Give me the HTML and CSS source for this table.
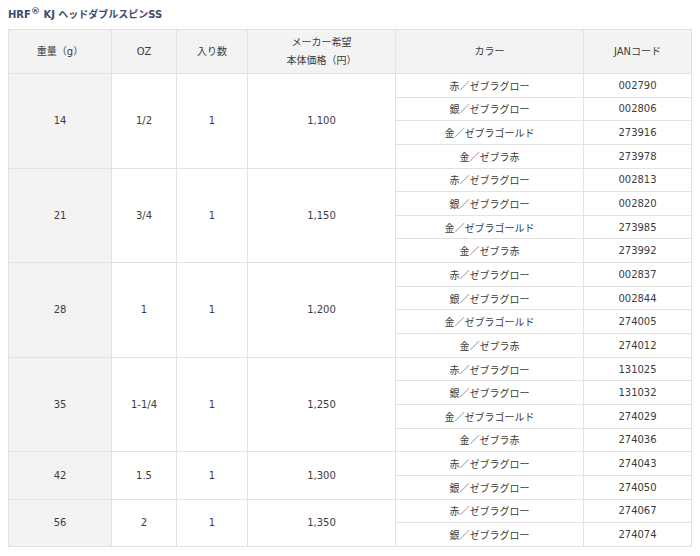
FILE: index.html
```html
<!DOCTYPE html>
<html lang="ja">
<head>
<meta charset="utf-8">
<title>HRF KJ ヘッドダブルスピンSS</title>
<link rel="stylesheet" href="styles.css">
</head>
<body>
<div class="title">HRF<sup class="reg">®</sup> KJ ヘッドダブルスピンSS</div>
<table class="spec">
  <colgroup>
    <col class="c1"><col class="c2"><col class="c3"><col class="c4"><col class="c5"><col class="c6">
  </colgroup>
  <thead>
    <tr>
      <th>重量（g）</th>
      <th>OZ</th>
      <th>入り数</th>
      <th class="two">メーカー希望<br>本体価格（円）</th>
      <th>カラー</th>
      <th>JANコード</th>
    </tr>
  </thead>
  <tbody>
    <tr><td class="w" rowspan="4">14</td><td rowspan="4">1/2</td><td rowspan="4">1</td><td rowspan="4">1,100</td><td>赤／ゼブラグロー</td><td>002790</td></tr>
    <tr><td>銀／ゼブラグロー</td><td>002806</td></tr>
    <tr><td>金／ゼブラゴールド</td><td>273916</td></tr>
    <tr><td>金／ゼブラ赤</td><td>273978</td></tr>

    <tr><td class="w" rowspan="4">21</td><td rowspan="4">3/4</td><td rowspan="4">1</td><td rowspan="4">1,150</td><td>赤／ゼブラグロー</td><td>002813</td></tr>
    <tr><td>銀／ゼブラグロー</td><td>002820</td></tr>
    <tr><td>金／ゼブラゴールド</td><td>273985</td></tr>
    <tr><td>金／ゼブラ赤</td><td>273992</td></tr>

    <tr><td class="w" rowspan="4">28</td><td rowspan="4">1</td><td rowspan="4">1</td><td rowspan="4">1,200</td><td>赤／ゼブラグロー</td><td>002837</td></tr>
    <tr><td>銀／ゼブラグロー</td><td>002844</td></tr>
    <tr><td>金／ゼブラゴールド</td><td>274005</td></tr>
    <tr><td>金／ゼブラ赤</td><td>274012</td></tr>

    <tr><td class="w" rowspan="4">35</td><td rowspan="4">1-1/4</td><td rowspan="4">1</td><td rowspan="4">1,250</td><td>赤／ゼブラグロー</td><td>131025</td></tr>
    <tr><td>銀／ゼブラグロー</td><td>131032</td></tr>
    <tr><td>金／ゼブラゴールド</td><td>274029</td></tr>
    <tr><td>金／ゼブラ赤</td><td>274036</td></tr>

    <tr><td class="w" rowspan="2">42</td><td rowspan="2">1.5</td><td rowspan="2">1</td><td rowspan="2">1,300</td><td>赤／ゼブラグロー</td><td>274043</td></tr>
    <tr><td>銀／ゼブラグロー</td><td>274050</td></tr>

    <tr><td class="w" rowspan="2">56</td><td rowspan="2">2</td><td rowspan="2">1</td><td rowspan="2">1,350</td><td>赤／ゼブラグロー</td><td>274067</td></tr>
    <tr><td>銀／ゼブラグロー</td><td>274074</td></tr>
  </tbody>
</table>
</body>
</html>
```
FILE: styles.css
```css
html, body {
  background: #ffffff;
}
body {
  margin: 5px 8px 0 8px;
  font-family: "DejaVu Sans", "Noto Sans CJK JP", sans-serif;
  font-size: 10px;
  color: #3c3c3c;
}
.title {
  height: 20px;
  line-height: 20px;
  margin-bottom: 4px;
  font-size: 10px;
  font-weight: bold;
  color: #3b4a6d;
}
.reg {
  font-size: 9px;
  line-height: 0;
  vertical-align: 4px;
}
.spec {
  border-collapse: collapse;
  table-layout: fixed;
  width: 683px;
}
.c1 { width: 103px; }
.c2 { width: 65px; }
.c3 { width: 71px; }
.c4 { width: 148px; }
.c5 { width: 188px; }
.c6 { width: 108px; }
.spec th,
.spec td {
  border: 1px solid #e2e2e2;
  text-align: center;
  vertical-align: middle;
  padding: 0;
  font-weight: normal;
}
.spec th {
  background: #f3f3f3;
  height: 43px;
  line-height: 18px;
}
.spec tbody tr {
  height: 23.65px;
}
.spec td.w {
  background: #f3f3f3;
}
```
